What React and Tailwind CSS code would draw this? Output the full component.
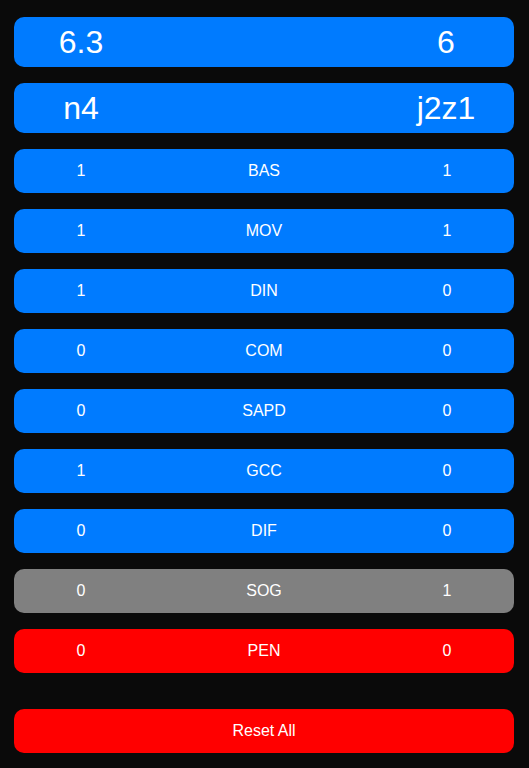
import React from 'react';

const ROWS = [
  { label: 'BAS', a: 1, b: 1, color: 'bg-[#007bff]' },
  { label: 'MOV', a: 1, b: 1, color: 'bg-[#007bff]' },
  { label: 'DIN', a: 1, b: 0, color: 'bg-[#007bff]' },
  { label: 'COM', a: 0, b: 0, color: 'bg-[#007bff]' },
  { label: 'SAPD', a: 0, b: 0, color: 'bg-[#007bff]' },
  { label: 'GCC', a: 1, b: 0, color: 'bg-[#007bff]' },
  { label: 'DIF', a: 0, b: 0, color: 'bg-[#007bff]' },
  { label: 'SOG', a: 0, b: 1, color: 'bg-[#808080]' },
  { label: 'PEN', a: 0, b: 0, color: 'bg-[#ff0000]' },
];

const Big = ({ left, right }) => (
  <div className="grid grid-cols-[134px_1fr_134px] items-center h-[50px] rounded-[10px] bg-[#007bff] text-[32px] leading-none">
    <span className="text-center">{left}</span>
    <span />
    <span className="text-center pr-[2px]">{right}</span>
  </div>
);

export default function App() {
  return (
    <div className="min-h-[768px] bg-[#0a0a0a] pl-[14px] pr-[15px] pt-[17px] text-white font-['Liberation_Sans',Arial,sans-serif]">
      <div className="flex flex-col gap-4">
        <Big left="6.3" right="6" />
        <Big left="n4" right="j2z1" />
        {ROWS.map((r) => (
          <div
            key={r.label}
            className={`grid grid-cols-[134px_1fr_134px] items-center h-[44px] rounded-[10px] text-base ${r.color}`}
          >
            <span className="text-center">{r.a}</span>
            <span className="text-center">{r.label}</span>
            <span className="text-center">{r.b}</span>
          </div>
        ))}
      </div>
      <button className="mt-9 w-full h-[44px] rounded-[10px] bg-[#ff0000] text-base text-white">
        Reset All
      </button>
    </div>
  );
}
